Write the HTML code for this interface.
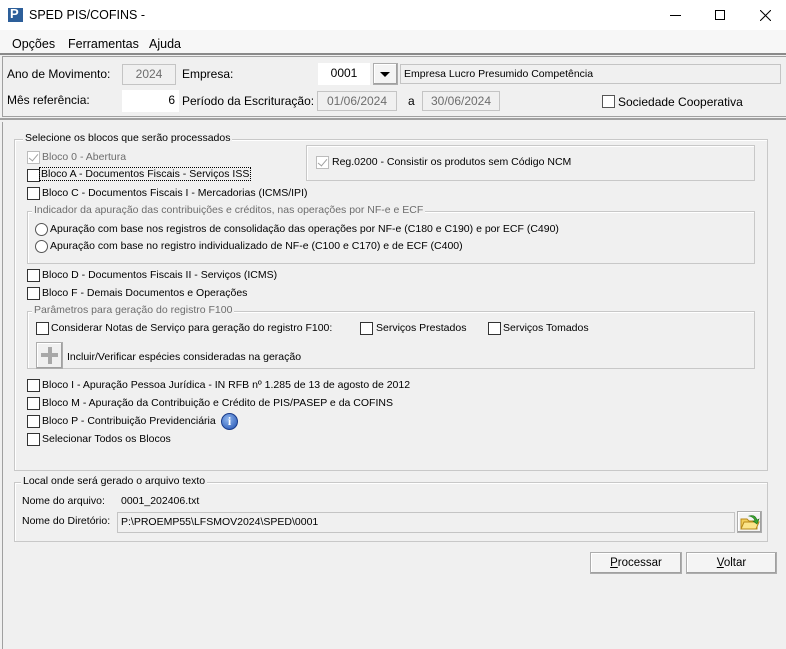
<!DOCTYPE html>
<html><head><meta charset="utf-8"><style>
*{box-sizing:border-box;margin:0;padding:0}
body{width:786px;height:649px;background:#f0f0f0;font-family:"Liberation Sans",Tahoma,sans-serif;font-size:10.5px;color:#000;position:relative;overflow:hidden}
.a{position:absolute;white-space:nowrap}
.t13{font-size:12px}
.cb{position:absolute;width:13px;height:13px;border:1px solid #333;background:#fff}
.cb.dis{border-color:#bcbcbc;background:#fff}
.cb.dis::after{content:"";position:absolute;left:3px;top:0px;width:4px;height:8px;border:solid #a0a0a0;border-width:0 1.5px 1.5px 0;transform:rotate(40deg)}
.rb{position:absolute;width:13px;height:13px;border:1px solid #333;border-radius:50%;background:#fff}
.grp{position:absolute;border:1px solid #c8c8c8;box-shadow:inset 1px 1px 0 #fff}
.lg{position:absolute;background:#f0f0f0;padding:0 2px}
.inp{position:absolute;border:1px solid #c4c4c4;background:#f0f0f0;color:#6d6d6d;font-size:12px;text-align:center;line-height:19px}
.btn{position:absolute;border:1px solid #adadad;background:#f4f4f4;box-shadow:inset -1px -1px 0 #a0a0a0, inset 1px 1px 0 #fff;text-align:center;font-size:11.5px;line-height:20px}
.gray{color:#6d6d6d}
</style></head><body>
<div class="a" style="left:0;top:0;width:786px;height:30px;background:#fff"></div>
<div class="a" style="left:8px;top:8px;width:15px;height:14px;background:#2d5f9a"></div>
<div class="a" style="left:10px;top:6px;color:#fff;font-weight:bold;font-size:13px">P</div>
<div class="a" style="left:29px;top:8px;font-size:12.5px">SPED PIS/COFINS -</div>
<div class="a" style="left:670px;top:15px;width:11px;height:1px;background:#000"></div>
<div class="a" style="left:715px;top:10px;width:10px;height:10px;border:1px solid #000"></div>
<svg class="a" style="left:760px;top:10px" width="11" height="11"><path d="M0 0L11 11M11 0L0 11" stroke="#000" stroke-width="1"/></svg>
<div class="a" style="left:0;top:30px;width:786px;height:23px;background:#f7f7f7"></div>
<div class="a" style="left:12px;top:37px;font-size:12.5px">Opções</div>
<div class="a" style="left:68px;top:37px;font-size:12.5px">Ferramentas</div>
<div class="a" style="left:149px;top:37px;font-size:12.5px">Ajuda</div>
<div class="a" style="left:0;top:53px;width:786px;height:2px;background:#8a8a8a"></div>
<div class="a" style="left:2px;top:56px;width:784px;height:61px;border:1px solid #a0a0a0;border-right:none"></div>
<div class="a t13" style="left:7px;top:67px">Ano de Movimento:</div>
<div class="inp" style="left:122px;top:64px;width:54px;height:21px">2024</div>
<div class="a t13" style="left:182px;top:67px">Empresa:</div>
<div class="inp" style="left:318px;top:63px;width:52px;height:22px;background:#fff;border-color:#fff;color:#000">0001</div>
<div class="btn" style="left:373px;top:63px;width:25px;height:22px"></div>
<div class="a" style="left:380px;top:72px;width:0;height:0;border-left:5px solid transparent;border-right:5px solid transparent;border-top:5px solid #000"></div>
<div class="inp" style="left:400px;top:64px;width:381px;height:20px;color:#000;text-align:left;padding-left:3px;font-size:10.5px;line-height:18px">Empresa Lucro Presumido Competência</div>
<div class="a t13" style="left:7px;top:93px">Mês referência:</div>
<div class="inp" style="left:122px;top:90px;width:57px;height:22px;background:#fff;border-color:#fff;color:#000;text-align:right;padding-right:3px">6</div>
<div class="a t13" style="left:182px;top:94px">Período da Escrituração:</div>
<div class="inp" style="left:317px;top:91px;width:80px;height:20px">01/06/2024</div>
<div class="a t13" style="left:408px;top:94px">a</div>
<div class="inp" style="left:422px;top:91px;width:78px;height:20px">30/06/2024</div>
<div class="cb" style="left:602px;top:95px;border-color:#555"></div>
<div class="a t13" style="left:618px;top:95px">Sociedade Cooperativa</div>
<div class="a" style="left:0;top:118px;width:786px;height:2px;background:#a0a0a0"></div>
<div class="a" style="left:2px;top:122px;width:1px;height:527px;background:#a0a0a0"></div>
<div class="grp" style="left:14px;top:139px;width:754px;height:332px"></div>
<div class="lg" style="left:23px;top:132px">Selecione os blocos que serão processados</div>
<div class="cb dis" style="left:27px;top:151px"></div><div class="a gray" style="left:42px;top:151px">Bloco 0 - Abertura</div>
<div class="cb" style="left:27px;top:169px"></div><div class="a" style="left:40px;top:168px;outline:1px dotted #000;padding:0 1px">Bloco A - Documentos Fiscais - Serviços  ISS</div>
<div class="cb" style="left:27px;top:187px"></div><div class="a" style="left:42px;top:187px">Bloco C - Documentos Fiscais  I - Mercadorias  (ICMS/IPI)</div>
<div class="grp" style="left:306px;top:145px;width:449px;height:36px"></div>
<div class="cb dis" style="left:316px;top:156px"></div><div class="a" style="left:332px;top:156px">Reg.0200 - Consistir os produtos sem Código NCM</div>
<div class="grp" style="left:27px;top:211px;width:728px;height:53px"></div>
<div class="lg gray" style="left:32px;top:204px">Indicador da apuração das contribuições e créditos, nas operações por NF-e e ECF</div>
<div class="rb" style="left:35px;top:223px;border-color:#555"></div><div class="a" style="left:50px;top:223px">Apuração com base nos registros de consolidação das operações por  NF-e (C180 e C190) e por  ECF (C490)</div>
<div class="rb" style="left:35px;top:240px;border-color:#555"></div><div class="a" style="left:50px;top:240px">Apuração com base no registro individualizado de NF-e (C100 e C170) e de ECF (C400)</div>
<div class="cb" style="left:27px;top:269px"></div><div class="a" style="left:42px;top:269px">Bloco D - Documentos Fiscais II - Serviços  (ICMS)</div>
<div class="cb" style="left:27px;top:287px"></div><div class="a" style="left:42px;top:287px">Bloco F - Demais Documentos e Operações</div>
<div class="grp" style="left:27px;top:311px;width:728px;height:58px"></div>
<div class="lg gray" style="left:32px;top:304px">Parâmetros para geração do registro F100</div>
<div class="cb" style="left:36px;top:322px"></div><div class="a" style="left:51px;top:322px">Considerar Notas de Serviço para geração do registro F100:</div>
<div class="cb" style="left:360px;top:322px"></div><div class="a" style="left:376px;top:322px">Serviços Prestados</div>
<div class="cb" style="left:488px;top:322px"></div><div class="a" style="left:503px;top:322px">Serviços Tomados</div>
<div class="btn" style="left:36px;top:342px;width:27px;height:27px;background:#f0f0f0"></div>
<div class="a" style="left:41px;top:353px;width:17px;height:4px;background:#a8a8a8"></div>
<div class="a" style="left:47.5px;top:347px;width:4px;height:17px;background:#a8a8a8"></div>
<div class="a" style="left:67px;top:351px">Incluir/Verificar espécies consideradas na geração</div>
<div class="cb" style="left:27px;top:379px"></div><div class="a" style="left:42px;top:379px">Bloco I - Apuração Pessoa Jurídica - IN RFB nº 1.285 de 13 de agosto de 2012</div>
<div class="cb" style="left:27px;top:397px"></div><div class="a" style="left:42px;top:397px">Bloco M - Apuração da Contribuição e Crédito de PIS/PASEP e da COFINS</div>
<div class="cb" style="left:27px;top:415px"></div><div class="a" style="left:42px;top:415px">Bloco P - Contribuição Previdenciária</div>
<div class="a" style="left:221px;top:413px;width:17px;height:17px;border-radius:50%;background:radial-gradient(circle at 40% 35%,#8fb6ee,#1f4fb0);border:1px solid #1a3c8a;color:#fff;font-weight:bold;font-family:'Liberation Serif',serif;font-size:12px;text-align:center;line-height:15px">i</div>
<div class="cb" style="left:27px;top:433px"></div><div class="a" style="left:42px;top:433px">Selecionar Todos os Blocos</div>
<div class="grp" style="left:14px;top:482px;width:754px;height:60px"></div>
<div class="lg" style="left:21px;top:475px">Local onde será gerado o arquivo texto</div>
<div class="a" style="left:22px;top:495px">Nome do arquivo:</div>
<div class="a" style="left:121px;top:495px">0001_202406.txt</div>
<div class="a" style="left:22px;top:515px">Nome do Diretório:</div>
<div class="inp" style="left:117px;top:512px;width:618px;height:21px;color:#000;text-align:left;padding-left:3px;font-size:10.5px;line-height:18px">P:\PROEMP55\LFSMOV2024\SPED\0001</div>
<div class="btn" style="left:737px;top:511px;width:25px;height:22px"></div>
<svg class="a" style="left:740px;top:513px" width="20" height="18"><path d="M1 6h6l2 2h8v8H1z" fill="#f3cf5c" stroke="#b88a1a"/><path d="M1 16l3-7h15l-3 7z" fill="#fbe48a" stroke="#b88a1a"/><path d="M9 3q6-2 8 4l2-1-2 5-4-3 2 0q-1-4-6-5z" fill="#3aa52f" stroke="#1d6e18" stroke-width=".6"/></svg>
<div class="btn" style="left:590px;top:552px;width:92px;height:22px"><u>P</u>rocessar</div>
<div class="btn" style="left:686px;top:552px;width:91px;height:22px"><u>V</u>oltar</div>
</body></html>
